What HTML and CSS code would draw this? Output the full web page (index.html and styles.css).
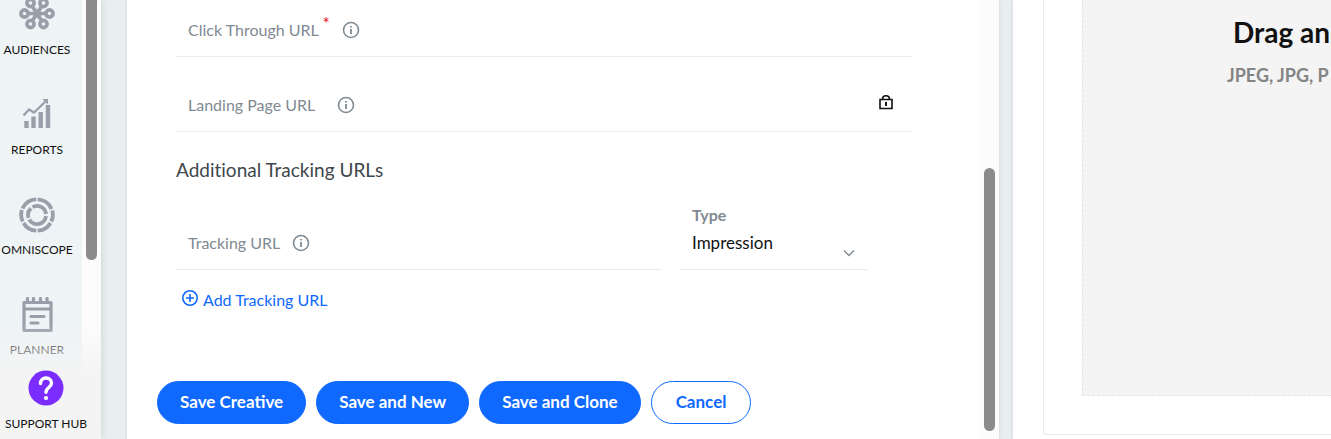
FILE: index.html
```html
<!DOCTYPE html>
<html lang="en">
<head>
  <meta charset="UTF-8" />
  <meta name="viewport" content="width=device-width, initial-scale=1.0" />
  <title>Creative</title>
  <link rel="stylesheet" href="styles.css">
</head>
<body>
  <svg class="sprite" aria-hidden="true">
    <symbol id="info" viewBox="0 0 18 18">
      <circle cx="9" cy="9" r="7.5" fill="none" stroke="currentColor" stroke-width="1.6" />
      <path d="M9 8v5M9 5v1.6" stroke="currentColor" stroke-width="1.8" />
    </symbol>
  </svg>

  <aside class="sidebar">
    <nav class="nav">
      <a class="nav-item" href="#">
        <svg width="36" height="36" viewBox="0 0 36 36" fill="none" stroke="currentColor" stroke-width="3.6">
          <path d="M9 16.500h18M13.500 9.500l9 14M22.500 9.500l-9 14" />
          <circle cx="5.500" cy="16.500" r="3.600" /><circle cx="30.500" cy="16.500" r="3.600" />
          <circle cx="11.500" cy="6" r="3.600" /><circle cx="24.500" cy="6" r="3.600" />
          <circle cx="11.500" cy="27" r="3.600" /><circle cx="24.500" cy="27" r="3.600" />
          <circle cx="18" cy="16.500" r="2.500" />
        </svg>
        <span>AUDIENCES</span>
      </a>
      <a class="nav-item" href="#">
        <svg width="36" height="36" viewBox="0 0 36 36" fill="none" stroke="currentColor">
          <path d="M7.500 31v-7M14.500 31V19.500M21.700 31V15M29 31V8" stroke-width="4.400" />
          <path d="M4.500 18.500l5.500-6 5 3L27 4" stroke-width="2.200" />
          <path d="M23.500 2H29v5.500z" fill="currentColor" stroke="none" />
        </svg>
        <span>REPORTS</span>
      </a>
      <a class="nav-item" href="#">
        <svg width="36" height="36" viewBox="0 0 36 36" fill="none" stroke="currentColor" stroke-width="3.800">
          <path d="M18.700 2.300A15.700 15.700 0 0 1 32.500 12M33.300 13.500A15.700 15.700 0 0 1 32.300 24.500M31.500 26A15.700 15.700 0 0 1 18.700 33.700M17.300 33.700A15.700 15.700 0 0 1 4.500 26M3.700 24.500A15.700 15.700 0 0 1 2.900 13M3.500 11.500A15.700 15.700 0 0 1 17.300 2.300" />
          <path d="M13.500 10.200A9 9 0 0 1 27 17M27 19A9 9 0 0 1 10.200 22.500M9.500 20.800A9 9 0 0 1 12 11.300" />
        </svg>
        <span>OMNISCOPE</span>
      </a>
      <a class="nav-item" href="#">
        <svg width="36" height="36" viewBox="0 0 36 36" fill="none" stroke="currentColor" stroke-width="3.200" stroke-linejoin="round">
          <path d="M5 5.500h27v28H5zM5 12h27" />
          <path d="M8.500 1.500v4M14.500 1.500v4M21.500 1.500v4M28 1.500v4M12 19.500h13M12 26h7" stroke-linecap="round" />
        </svg>
        <span>PLANNER</span>
      </a>
    </nav>
    <div class="track"><div class="thumb nav-thumb"></div></div>
    <a class="support" href="#">
      <svg width="36" height="36" viewBox="0 0 36 36" fill="none">
        <circle cx="18" cy="18" r="17.500" fill="#7b2cff" />
        <path d="M12.500 13.500c0-3.500 2.300-5.500 5.500-5.500s5.500 2 5.500 5.100c0 4.600-5.500 4.200-5.500 9.200" stroke="#fff" stroke-width="3.400" stroke-linecap="round" />
        <circle cx="18" cy="28" r="2.100" fill="#fff" />
      </svg>
      <span>SUPPORT HUB</span>
    </a>
  </aside>

  <main class="panel">
    <form class="form">
      <div class="field">
        <label for="clickUrl">Click Through URL <sup>*</sup></label>
        <svg class="info"><use href="#info" /></svg>
        <input type="text" id="clickUrl" />
      </div>
      <div class="field">
        <label class="wide" for="landingUrl">Landing Page URL</label>
        <svg class="info"><use href="#info" /></svg>
        <input type="text" id="landingUrl" />
        <svg class="lock" width="14" height="16" viewBox="0 0 14 16" fill="none" stroke="#111" stroke-width="1.600">
          <path d="M1 4.500h12v9H1zM3.500 4.500c0-5 7-5 7 0" />
          <path d="M7 7v4" stroke-width="2" />
        </svg>
      </div>

      <h2>Additional Tracking URLs</h2>

      <div class="tracking">
        <div class="field">
          <label for="trackingUrl">Tracking URL</label>
          <svg class="info"><use href="#info" /></svg>
          <input type="text" id="trackingUrl" />
        </div>
        <div class="type">
          <label for="type">Type</label>
          <div class="select">
            <select id="type"><option>Impression</option></select>
            <svg width="12" height="8" viewBox="0 0 12 8" fill="none" stroke="#7f8a92" stroke-width="1.400"><path d="M1 1.500l5 5 5-5" /></svg>
          </div>
        </div>
      </div>

      <button type="button" class="add">
        <svg width="18" height="18" viewBox="0 0 18 18" fill="none" stroke="currentColor" stroke-width="1.600">
          <circle cx="9" cy="8" r="7.200" /><path d="M9 4v8M5 8h8" />
        </svg>
        Add Tracking URL
      </button>

      <div class="actions">
        <button type="button" class="btn">Save Creative</button>
        <button type="button" class="btn">Save and New</button>
        <button type="button" class="btn">Save and Clone</button>
        <button type="button" class="btn outline">Cancel</button>
      </div>
    </form>
    <div class="track"><div class="thumb form-thumb"></div></div>
  </main>

  <section class="preview">
    <div class="card">
      <div class="dropzone">
        <h3>Drag an</h3>
        <p>JPEG, JPG, P</p>
      </div>
    </div>
  </section>
</body>
</html>
```
FILE: styles.css
```css
* { box-sizing: border-box; }
body { margin: 0; min-height: 100vh; display: flex; overflow: hidden; background: #e9eef1; color: #111; font-family: Lato, "Liberation Sans", sans-serif; font-size: 16px; font-variant-ligatures: none; }
h2, h3, p { margin: 0; font-weight: normal; }
a { color: inherit; text-decoration: none; }
svg { flex: none; }
.sprite { position: absolute; width: 0; height: 0; }

.track { width: 19px; flex: none; background: #fcfcfc; padding: 0 4px; }
.thumb { width: 11px; background: #8b8b8b; }
.nav-thumb { height: 260px; border-radius: 0 0 6px 6px; }
.form-thumb { height: 263px; margin-top: 168px; border-radius: 6px; }

.sidebar { position: relative; display: flex; flex: none; width: 101px; height: 100vh; overflow: hidden; background: #eef3f6; box-shadow: 0 0 8px rgba(0, 0, 0, 0.12); }
.nav { width: 82px; padding-right: 8px; margin-top: -3px; }
.nav-item { display: flex; flex-direction: column; align-items: center; gap: 9px; margin-bottom: 39px; font-size: 12px; line-height: 16px; white-space: nowrap; }
.nav-item svg { color: #989fa9; }
.support { position: absolute; left: 0; right: 0; bottom: 0; padding: 46px 9px 7px 0; display: flex; flex-direction: column; align-items: center; gap: 10px; font-size: 12px; line-height: 16px; white-space: nowrap; background: linear-gradient(rgba(244, 244, 244, 0), #f4f4f4 50px); }

.panel { flex: 1; display: flex; min-width: 0; margin-left: 26px; background: #fff; box-shadow: 0 0 4px rgba(0, 0, 0, 0.12); }
.form { flex: 1; min-width: 0; padding: 5px 68px 15px 49px; }
.field { display: flex; align-items: center; height: 52px; margin-bottom: 23px; padding: 0 19px 2px 12px; border-bottom: 1px solid #e9ebec; }
.field label { margin-right: 12px; color: #7f8a92; white-space: nowrap; }
.field label.wide { margin-right: 22px; }
.field input { flex: 1; min-width: 0; border: 0; outline: 0; background: none; font: inherit; }
.field sup { color: #e8112d; line-height: 0; vertical-align: 6px; font-size: 17px; }
.info { width: 18px; height: 18px; color: #7f8a92; }
.lock { margin-bottom: 4px; }
h2 { margin-top: 26px; color: #40474c; font-size: 19px; line-height: 24px; }

.tracking { display: flex; align-items: flex-end; gap: 18px; margin: 24px 44px 0 0; }
.tracking .field { flex: 1; margin: 0; }
.type { width: 189px; padding-left: 13px; border-bottom: 1px solid #e9ebec; }
.type label { display: block; color: #7f8a92; font-size: 16px; font-weight: bold; line-height: 18px; }
.select { display: flex; align-items: center; height: 45px; padding: 0 13px 8px 0; }
.select select { flex: 1; min-width: 0; height: 36px; padding: 0; border: 0; appearance: none; background: none; color: #111; font: inherit; font-size: 17px; }
.select svg { margin-top: 20px; }
.add { display: flex; align-items: center; gap: 4px; height: 24px; margin: 17px 0 0 5px; padding: 0; border: 0; background: none; color: #0f69ff; font: inherit; cursor: pointer; }

.actions { display: flex; gap: 10px; margin: 70px 0 0 -19px; }
.btn { height: 43px; padding: 0 22px 2px; border: 1px solid #0f69ff; border-radius: 22px; background: #0f69ff; color: #fff; font: bold 17px Lato, "Liberation Sans", sans-serif; white-space: nowrap; cursor: pointer; }
.btn.outline { padding: 0 24px 2px; background: #fff; color: #0f69ff; }

.preview { width: 318px; flex: none; margin-left: 14px; padding: 0 0 4px 30px; overflow: hidden; background: #fff; box-shadow: 0 0 4px rgba(0, 0, 0, 0.12); }
.card { padding: 0 0 38px 38px; border: solid #e9ebec; border-width: 0 0 1px 1px; border-radius: 0 0 0 4px; }
.dropzone { min-height: 396px; padding-top: 16px; border: dashed #e4e4e4; border-width: 0 0 1px 1px; background: #f4f4f4; white-space: nowrap; }
.dropzone h3 { padding-left: 150px; font-size: 28px; font-weight: bold; line-height: 32px; }
.dropzone p { margin-top: 15px; padding-left: 144px; color: #858585; font-size: 18px; font-weight: bold; line-height: 24px; }
```
